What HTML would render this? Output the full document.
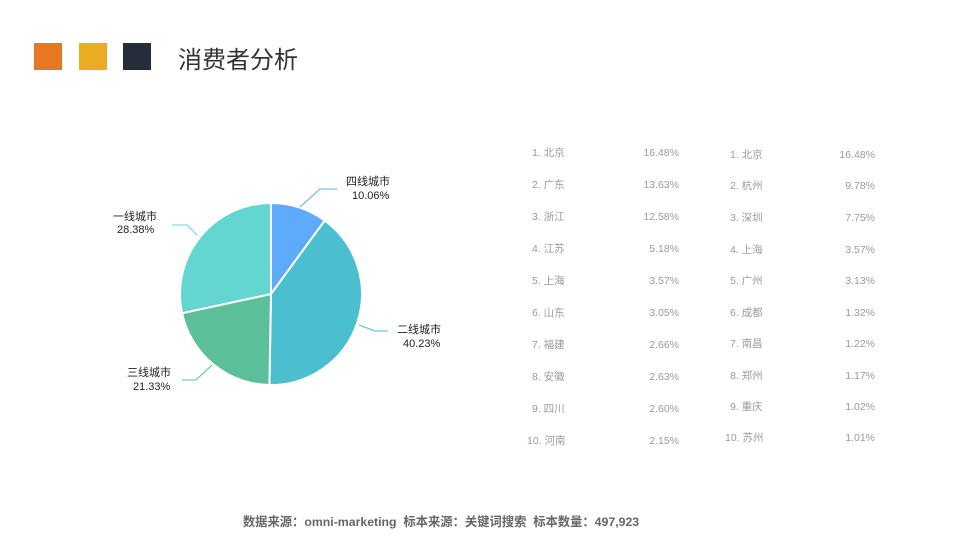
<!DOCTYPE html>
<html><head><meta charset="utf-8"><style>
body{margin:0;width:960px;height:540px;background:#fff;position:relative;overflow:hidden;font-family:"Liberation Sans","Noto Sans CJK SC",sans-serif}
.sq{position:absolute;top:43px;width:28px;height:27px}
.t{position:absolute;left:178px;top:40px;font-size:24px;color:#333}
.r{position:absolute;font-size:10.5px;color:#9a9a9a;height:14px;line-height:14px}
.r span{position:absolute;right:0}
.ft{position:absolute;left:0;width:882px;text-align:center;top:512px;font-size:12.3px;color:#666;font-weight:bold}
</style></head><body>
<div class="sq" style="left:34px;background:#e87722"></div>
<div class="sq" style="left:79px;background:#ecac21"></div>
<div class="sq" style="left:123px;background:#252d3a"></div>
<div class="t">消费者分析</div>
<svg width="960" height="540" style="position:absolute;left:0;top:0">
<g stroke="#fff" stroke-width="2" stroke-linejoin="round">
<path d="M271,294 L271,203 A91,91 0 0 1 324.7,220.6Z" fill="#5fabfb"/>
<path d="M271,294 L324.7,220.6 A91,91 0 0 1 269.4,385Z" fill="#4bbfcf"/>
<path d="M271,294 L269.4,385 A91,91 0 0 1 182.1,313.2Z" fill="#5bbf9a"/>
<path d="M271,294 L182.1,313.2 A91,91 0 0 1 271,203Z" fill="#63d6d2"/>
</g>
<g fill="none" stroke-width="1">
<polyline points="300,207 320,189 337,189" stroke="#5fabfb"/>
<polyline points="359,325 375,331 388,331" stroke="#4bbfcf"/>
<polyline points="212,365 196,380 182,380" stroke="#5bbf9a"/>
<polyline points="197,235 187,225 172,225" stroke="#63d6d2"/>
</g>
<g font-size="11" fill="#222" font-family="Liberation Sans,Noto Sans CJK SC,sans-serif">
<text x="346" y="185">四线城市</text><text x="352" y="199">10.06%</text>
<text x="397" y="333">二线城市</text><text x="403" y="347">40.23%</text>
<text x="127" y="376">三线城市</text><text x="133" y="390">21.33%</text>
<text x="113" y="220">一线城市</text><text x="117" y="233">28.38%</text>
</g>
</svg>
<div class="r" style="left:532px;top:146px;width:147px">1. 北京<span>16.48%</span></div>
<div class="r" style="left:532px;top:178px;width:147px">2. 广东<span>13.63%</span></div>
<div class="r" style="left:532px;top:210px;width:147px">3. 浙江<span>12.58%</span></div>
<div class="r" style="left:532px;top:242px;width:147px">4. 江苏<span>5.18%</span></div>
<div class="r" style="left:532px;top:274px;width:147px">5. 上海<span>3.57%</span></div>
<div class="r" style="left:532px;top:306px;width:147px">6. 山东<span>3.05%</span></div>
<div class="r" style="left:532px;top:338px;width:147px">7. 福建<span>2.66%</span></div>
<div class="r" style="left:532px;top:370px;width:147px">8. 安徽<span>2.63%</span></div>
<div class="r" style="left:532px;top:402px;width:147px">9. 四川<span>2.60%</span></div>
<div class="r" style="left:527px;top:434px;width:152px">10. 河南<span>2.15%</span></div>
<div class="r" style="left:730px;top:148px;width:145px">1. 北京<span>16.48%</span></div>
<div class="r" style="left:730px;top:179px;width:145px">2. 杭州<span>9.78%</span></div>
<div class="r" style="left:730px;top:211px;width:145px">3. 深圳<span>7.75%</span></div>
<div class="r" style="left:730px;top:243px;width:145px">4. 上海<span>3.57%</span></div>
<div class="r" style="left:730px;top:274px;width:145px">5. 广州<span>3.13%</span></div>
<div class="r" style="left:730px;top:306px;width:145px">6. 成都<span>1.32%</span></div>
<div class="r" style="left:730px;top:337px;width:145px">7. 南昌<span>1.22%</span></div>
<div class="r" style="left:730px;top:369px;width:145px">8. 郑州<span>1.17%</span></div>
<div class="r" style="left:730px;top:400px;width:145px">9. 重庆<span>1.02%</span></div>
<div class="r" style="left:725px;top:431px;width:150px">10. 苏州<span>1.01%</span></div>
<div class="ft">数据来源：omni-marketing&nbsp; 标本来源：关键词搜索&nbsp; 标本数量：497,923</div>
</body></html>
